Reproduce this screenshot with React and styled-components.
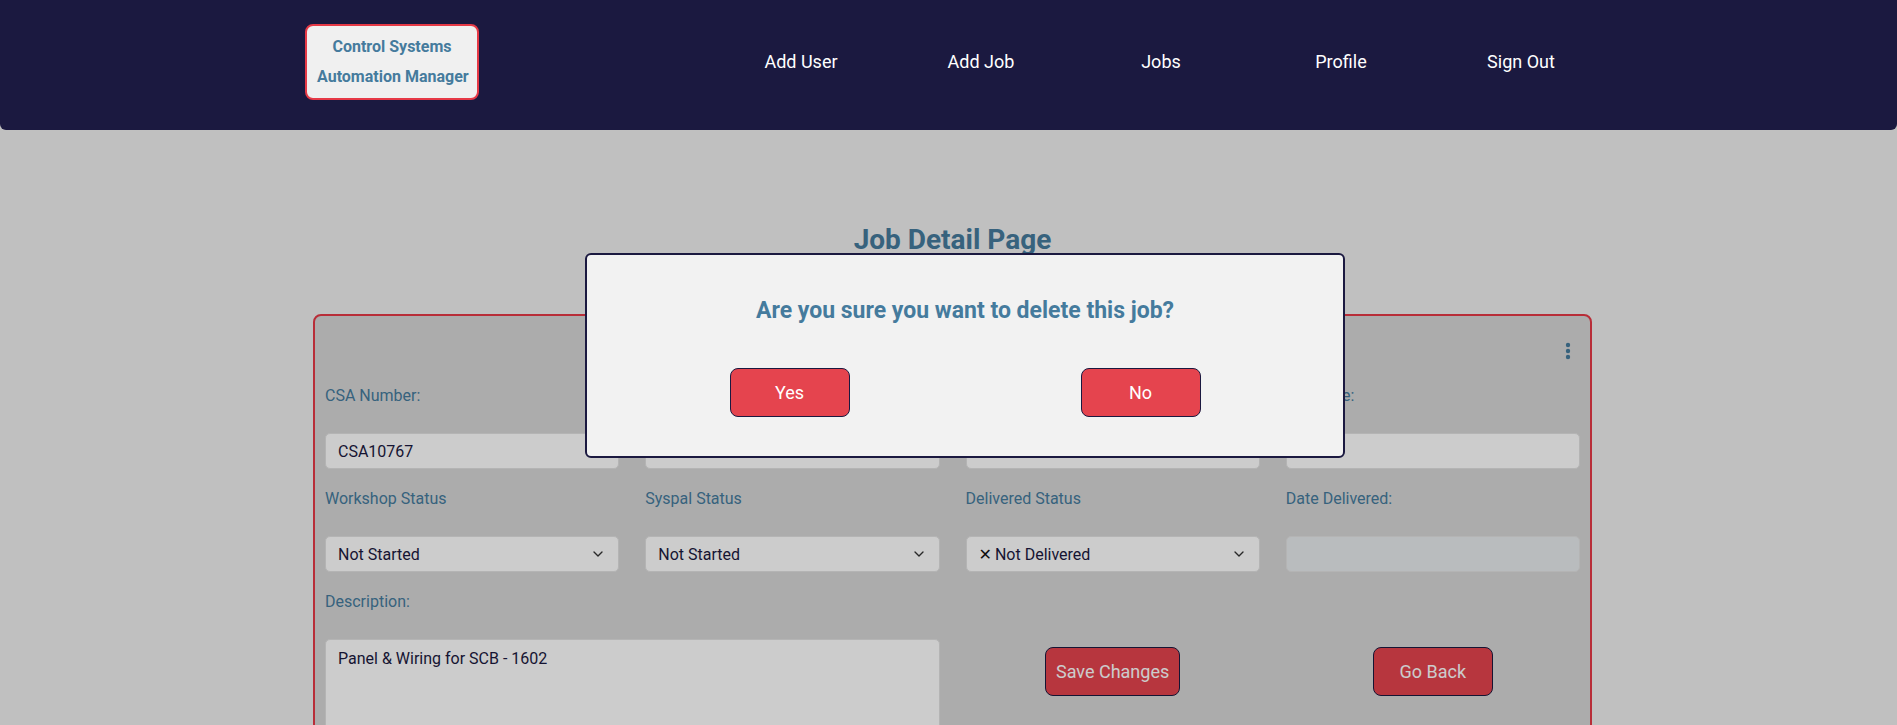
import React from 'react';
import styled, { createGlobalStyle } from 'styled-components';
import { ChevronDown } from 'lucide-react';

const GlobalStyle = createGlobalStyle`
  html, body {
    margin: 0;
    padding: 0;
    overflow: hidden;
  }
  body {
    background: #f0f0f0;
    font-family: Roboto, "Noto Sans", "Liberation Sans", sans-serif;
  }
  * {
    box-sizing: border-box;
  }
`;

const Nav = styled.nav`
  position: relative;
  z-index: 20;
  height: 130px;
  padding: 0 0 6px 305px;
  display: flex;
  align-items: center;
  background: #1b1940;
  border-radius: 0 0 6px 6px;
`;

const Logo = styled.div`
  width: 174px;
  padding: 6px 10px;
  border: 2px solid #e63946;
  border-radius: 8px;
  background: #f0f0f0;
  color: #457b9d;
  font-size: 16px;
  font-weight: 700;
  line-height: 30px;
  text-align: center;
  white-space: nowrap;
`;

const NavLinks = styled.ul`
  display: grid;
  grid-template-columns: repeat(5, 180px);
  margin: 0 0 0 232px;
  padding: 0;
  list-style: none;
`;

const NavLink = styled.li`
  text-align: center;
  color: #ffffff;
  font-size: 18px;
  line-height: 22px;
  cursor: pointer;
`;

const Main = styled.main`
  padding: 93px 0 0 8px;
`;

const Title = styled.h1`
  margin: 0;
  font-size: 28px;
  line-height: 33px;
  font-weight: 700;
  text-align: center;
  color: #457b9d;
`;

const Card = styled.section`
  width: 1279px;
  height: 460px;
  margin: 58px auto 0;
  padding: 10px;
  border: 2px solid #e63946;
  border-radius: 8px;
  background: #d8d8d8;
`;

const CardHeader = styled.div`
  height: 60px;
  padding: 16px 4px 0 0;
  display: flex;
  justify-content: flex-end;
  align-items: flex-start;
`;

const Grid = styled.div`
  display: grid;
  grid-template-columns: repeat(4, 1fr);
  column-gap: 26px;
  row-gap: 20px;
`;

const Field = styled.div`
  display: flex;
  flex-direction: column;
  grid-column: span ${(p) => p.span || 1};
`;

const Label = styled.label`
  margin-bottom: 28px;
  color: #457b9d;
  font-size: 16px;
  line-height: 19px;
`;

const Input = styled.input`
  height: 36px;
  padding: 0 12px;
  border: 1px solid #e2e2e2;
  border-radius: 5px;
  background: ${(p) => (p.disabled ? '#e8ebee' : '#ffffff')};
  color: #1b1940;
  font-family: inherit;
  font-size: 16px;
  outline: none;
`;

const SelectBox = styled.div`
  height: 36px;
  padding: 0 12px;
  display: flex;
  align-items: center;
  justify-content: space-between;
  border: 1px solid #e2e2e2;
  border-radius: 5px;
  background: #ffffff;
  color: #1b1940;
  font-size: 16px;
`;

const Cross = styled.span`
  margin-right: 3px;
  font-family: "DejaVu Sans", sans-serif;
  font-size: 16px;
  color: #111;
`;

const TextArea = styled.textarea`
  height: 110px;
  padding: 9px 12px;
  border: 1px solid #e2e2e2;
  border-radius: 5px;
  background: #ffffff;
  color: #1b1940;
  font-family: inherit;
  font-size: 16px;
  outline: none;
`;

const ButtonCell = styled.div`
  padding-top: 55px;
  display: flex;
  justify-content: center;
  align-items: flex-start;
`;

const Button = styled.button`
  min-width: 120px;
  height: 49px;
  padding: 0 10px;
  border: 1px solid #1b1940;
  border-radius: 8px;
  background: #e5444e;
  color: #ffffff;
  font-family: inherit;
  font-size: 18px;
  cursor: pointer;
`;

const Overlay = styled.div`
  position: fixed;
  inset: 0;
  z-index: 10;
  background: rgba(0, 0, 0, 0.2);
`;

const Modal = styled.div`
  position: absolute;
  top: 253px;
  left: 585px;
  width: 760px;
  padding: 42px 0 39px;
  border: 2px solid #1b1940;
  border-radius: 6px;
  background: #f2f2f2;
`;

const Question = styled.h2`
  margin: 0 0 44px;
  color: #457b9d;
  font-size: 23px;
  line-height: 27px;
  font-weight: 700;
  text-align: center;
`;

const ModalActions = styled.div`
  display: flex;
  justify-content: center;
  gap: 231px;
`;

const Kebab = () => (
  <svg width="16" height="18" viewBox="0 0 16 18">
    <circle cx="8" cy="3" r="2.2" fill="#457b9d" />
    <circle cx="8" cy="9" r="2.2" fill="#457b9d" />
    <circle cx="8" cy="15" r="2.2" fill="#457b9d" />
  </svg>
);

const Select = ({ children }) => (
  <SelectBox>
    <span>{children}</span>
    <ChevronDown size={16} strokeWidth={2} color="#333" />
  </SelectBox>
);

export default function App() {
  return (
    <>
      <GlobalStyle />
      <Nav>
        <Logo>
          Control Systems
          <br />
          Automation Manager
        </Logo>
        <NavLinks>
          <NavLink>Add User</NavLink>
          <NavLink>Add Job</NavLink>
          <NavLink>Jobs</NavLink>
          <NavLink>Profile</NavLink>
          <NavLink>Sign Out</NavLink>
        </NavLinks>
      </Nav>

      <Main>
        <Title>Job Detail Page</Title>
        <Card>
          <CardHeader>
            <Kebab />
          </CardHeader>
          <Grid>
            <Field>
              <Label>CSA Number:</Label>
              <Input defaultValue="CSA10767" />
            </Field>
            <Field>
              <Label>Customer:</Label>
              <Input defaultValue="" />
            </Field>
            <Field>
              <Label>Site:</Label>
              <Input defaultValue="" />
            </Field>
            <Field>
              <Label>Due Date:</Label>
              <Input defaultValue="" />
            </Field>

            <Field>
              <Label>Workshop Status</Label>
              <Select>Not Started</Select>
            </Field>
            <Field>
              <Label>Syspal Status</Label>
              <Select>Not Started</Select>
            </Field>
            <Field>
              <Label>Delivered Status</Label>
              <Select>
                <Cross>✕</Cross>Not Delivered
              </Select>
            </Field>
            <Field>
              <Label>Date Delivered:</Label>
              <Input disabled defaultValue="" />
            </Field>

            <Field span={2}>
              <Label>Description:</Label>
              <TextArea defaultValue="Panel & Wiring for SCB - 1602" />
            </Field>
            <ButtonCell>
              <Button>Save Changes</Button>
            </ButtonCell>
            <ButtonCell>
              <Button>Go Back</Button>
            </ButtonCell>
          </Grid>
        </Card>
      </Main>

      <Overlay>
        <Modal>
          <Question>Are you sure you want to delete this job?</Question>
          <ModalActions>
            <Button>Yes</Button>
            <Button>No</Button>
          </ModalActions>
        </Modal>
      </Overlay>
    </>
  );
}
